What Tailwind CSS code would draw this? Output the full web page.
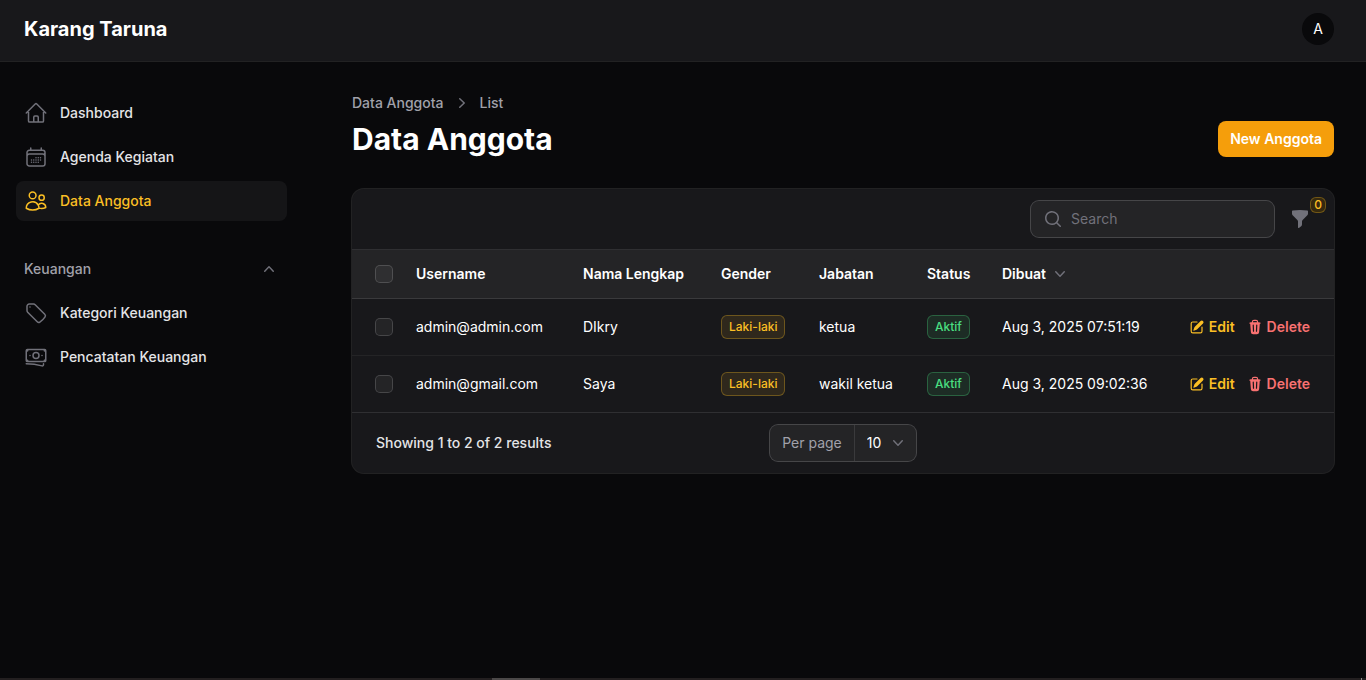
<!DOCTYPE html>
<html lang="id">
<head>
<meta charset="utf-8">
<meta name="viewport" content="width=device-width, initial-scale=1">
<title>Data Anggota - Karang Taruna</title>
<script src="https://cdn.jsdelivr.net/npm/@tailwindcss/browser@4"></script>
</head>
<body class="flex min-h-screen flex-col bg-[#09090b] font-['Inter',sans-serif] text-sm text-white antialiased">
<svg class="hidden" aria-hidden="true">
  <symbol id="pencil" viewBox="0 0 20 20" fill="currentColor"><path d="m5.433 13.917 1.262-3.155A4 4 0 0 1 7.58 9.42l6.92-6.918a2.121 2.121 0 0 1 3 3l-6.92 6.918c-.383.383-.84.685-1.343.886l-3.154 1.262a.5.5 0 0 1-.65-.65Z"/><path d="M3.5 5.75c0-.69.56-1.25 1.25-1.25H10A.75.75 0 0 0 10 3H4.75A2.75 2.75 0 0 0 2 5.75v9.5A2.75 2.75 0 0 0 4.75 18h9.5A2.75 2.75 0 0 0 17 15.25V10a.75.75 0 0 0-1.5 0v5.25c0 .69-.56 1.25-1.25 1.25h-9.5c-.69 0-1.25-.56-1.25-1.25v-9.5Z"/></symbol>
  <symbol id="trash" viewBox="0 0 20 20" fill="currentColor"><path fill-rule="evenodd" clip-rule="evenodd" d="M8.75 1A2.75 2.75 0 0 0 6 3.75v.443c-.795.077-1.584.176-2.365.298a.75.75 0 1 0 .23 1.482l.149-.022.841 10.518A2.75 2.75 0 0 0 7.596 19h4.807a2.75 2.75 0 0 0 2.742-2.53l.841-10.52.149.023a.75.75 0 0 0 .23-1.482A41.03 41.03 0 0 0 14 4.193V3.75A2.75 2.75 0 0 0 11.25 1h-2.5ZM10 4c.84 0 1.673.025 2.5.075V3.75c0-.69-.56-1.25-1.25-1.25h-2.5c-.69 0-1.25.56-1.25 1.25v.325C8.327 4.025 9.16 4 10 4ZM8.58 7.72a.75.75 0 0 0-1.5.06l.3 7.5a.75.75 0 1 0 1.5-.06l-.3-7.5Zm4.34.06a.75.75 0 1 0-1.5-.06l-.3 7.5a.75.75 0 1 0 1.5.06l.3-7.5Z"/></symbol>
  <symbol id="chevron-down" viewBox="0 0 20 20" fill="currentColor"><path fill-rule="evenodd" clip-rule="evenodd" d="M5.23 7.21a.75.75 0 0 1 1.06.02L10 11.168l3.71-3.938a.75.75 0 1 1 1.08 1.04l-4.25 4.5a.75.75 0 0 1-1.08 0l-4.25-4.5a.75.75 0 0 1 .02-1.06Z"/></symbol>
</svg>

<header class="flex h-[61px] shrink-0 items-center justify-between bg-[#18181b] pb-1 pl-6 pr-8 ring-1 ring-white/10">
  <a href="#" class="text-xl font-bold leading-5">Karang Taruna</a>
  <button type="button" aria-label="User menu" class="size-8 rounded-full bg-[#09090b] text-sm">A</button>
</header>

<div class="flex grow">
  <aside class="w-80 shrink-0 pt-8">
    <nav class="flex flex-col gap-7 pl-4 pr-[33px] font-medium text-[#e4e4e7]">
      <ul class="flex flex-col gap-1">
        <li><a href="#" class="flex items-center gap-3 rounded-lg p-2 leading-6">
          <svg class="size-6 shrink-0 text-[#71717a]" fill="none" viewBox="0 0 24 24" stroke="currentColor" stroke-width="1.5" stroke-linecap="round" stroke-linejoin="round"><path d="m2.25 12 8.954-8.955c.44-.439 1.152-.439 1.591 0L21.75 12M4.5 9.75v10.125c0 .621.504 1.125 1.125 1.125H9.75v-4.875c0-.621.504-1.125 1.125-1.125h2.25c.621 0 1.125.504 1.125 1.125V21h4.125c.621 0 1.125-.504 1.125-1.125V9.75M8.25 21h8.25"/></svg>
          Dashboard</a></li>
        <li><a href="#" class="flex items-center gap-3 rounded-lg p-2 leading-6">
          <svg class="size-6 shrink-0 text-[#71717a]" fill="none" viewBox="0 0 24 24" stroke="currentColor" stroke-width="1.5" stroke-linecap="round" stroke-linejoin="round"><path d="M6.75 3v2.25M17.25 3v2.25M3 18.75V7.5a2.25 2.25 0 0 1 2.25-2.25h13.5A2.25 2.25 0 0 1 21 7.5v11.25m-18 0A2.25 2.25 0 0 0 5.25 21h13.5A2.25 2.25 0 0 0 21 18.75m-18 0v-7.5A2.25 2.25 0 0 1 5.25 9h13.5A2.25 2.25 0 0 1 21 11.25v7.5m-9-6h.008v.008H12v-.008ZM12 15h.008v.008H12V15Zm0 2.25h.008v.008H12v-.008ZM9.75 15h.008v.008H9.75V15Zm0 2.25h.008v.008H9.75v-.008ZM7.5 15h.008v.008H7.5V15Zm0 2.25h.008v.008H7.5v-.008Zm6.75-4.5h.008v.008h-.008v-.008Zm0 2.25h.008v.008h-.008V15Zm0 2.25h.008v.008h-.008v-.008Zm2.25-4.5h.008v.008H16.5v-.008Zm0 2.25h.008v.008H16.5V15Z"/></svg>
          Agenda Kegiatan</a></li>
        <li><a href="#" aria-current="page" class="flex items-center gap-3 rounded-lg bg-white/5 p-2 leading-6 text-[#fbbf24]">
          <svg class="size-6 shrink-0" fill="none" viewBox="0 0 24 24" stroke="currentColor" stroke-width="1.5" stroke-linecap="round" stroke-linejoin="round"><path d="M15 19.128a9.38 9.38 0 0 0 2.625.372 9.337 9.337 0 0 0 4.121-.952 4.125 4.125 0 0 0-7.533-2.493M15 19.128v-.003c0-1.113-.285-2.16-.786-3.07M15 19.128v.106A12.318 12.318 0 0 1 8.624 21c-2.331 0-4.512-.645-6.374-1.766l-.001-.109a6.375 6.375 0 0 1 11.964-3.07M12 6.375a3.375 3.375 0 1 1-6.75 0 3.375 3.375 0 0 1 6.75 0Zm8.25 2.25a2.625 2.625 0 1 1-5.25 0 2.625 2.625 0 0 1 5.25 0Z"/></svg>
          Data Anggota</a></li>
      </ul>
      <div class="flex flex-col gap-1">
        <button type="button" aria-expanded="true" class="flex items-center justify-between p-2 leading-6 text-[#a1a1aa]">
          Keuangan
          <svg class="size-5 text-[#71717a]" viewBox="0 0 20 20" fill="currentColor"><path fill-rule="evenodd" clip-rule="evenodd" d="M14.77 12.79a.75.75 0 0 1-1.06-.02L10 8.832 6.29 12.77a.75.75 0 1 1-1.08-1.04l4.25-4.5a.75.75 0 0 1 1.08 0l4.25 4.5a.75.75 0 0 1-.02 1.06Z"/></svg>
        </button>
        <ul class="flex flex-col gap-1">
          <li><a href="#" class="flex items-center gap-3 rounded-lg p-2 leading-6">
            <svg class="size-6 shrink-0 text-[#71717a]" fill="none" viewBox="0 0 24 24" stroke="currentColor" stroke-width="1.5" stroke-linecap="round" stroke-linejoin="round"><path d="M9.568 3H5.25A2.25 2.25 0 0 0 3 5.25v4.318c0 .597.237 1.17.659 1.591l9.581 9.581c.699.699 1.78.872 2.607.33a18.095 18.095 0 0 0 5.223-5.223c.542-.827.369-1.908-.33-2.607L11.16 3.66A2.25 2.25 0 0 0 9.568 3Z"/><path d="M6 6h.008v.008H6V6Z"/></svg>
            Kategori Keuangan</a></li>
          <li><a href="#" class="flex items-center gap-3 rounded-lg p-2 leading-6">
            <svg class="size-6 shrink-0 text-[#71717a]" fill="none" viewBox="0 0 24 24" stroke="currentColor" stroke-width="1.5" stroke-linecap="round" stroke-linejoin="round"><path d="M2.25 18.75a60.07 60.07 0 0 1 15.797 2.101c.727.198 1.453-.342 1.453-1.096V18.75M3.75 4.5v.75A.75.75 0 0 1 3 6h-.75m0 0v-.375c0-.621.504-1.125 1.125-1.125H20.25M2.25 6v9m18-10.5v.75c0 .414.336.75.75.75h.75m-1.5-1.5h.375c.621 0 1.125.504 1.125 1.125v9.75c0 .621-.504 1.125-1.125 1.125h-.375m1.5-1.5H21a.75.75 0 0 0-.75.75v.75m0 0H3.75m0 0h-.375a1.125 1.125 0 0 1-1.125-1.125V15m1.5 1.5v-.75A.75.75 0 0 0 3 15h-.75M15 10.5a3 3 0 1 1-6 0 3 3 0 0 1 6 0Zm3 0h.008v.008H18V10.5Zm-12 0h.008v.008H6V10.5Z"/></svg>
            Pencatatan Keuangan</a></li>
        </ul>
      </div>
    </nav>
  </aside>

  <main class="flex min-w-0 grow flex-col gap-8 px-8 pt-8">
    <div class="flex items-end justify-between">
      <div>
        <nav aria-label="Breadcrumb" class="mb-2 flex items-center gap-2 font-medium leading-5 text-[#a1a1aa]">
          <a href="#">Data Anggota</a>
          <svg class="size-5 text-[#71717a]" viewBox="0 0 20 20" fill="currentColor"><path fill-rule="evenodd" clip-rule="evenodd" d="M7.21 14.77a.75.75 0 0 1 .02-1.06L11.168 10 7.23 6.29a.75.75 0 1 1 1.04-1.08l4.5 4.25a.75.75 0 0 1 0 1.08l-4.5 4.25a.75.75 0 0 1-1.06-.02Z"/></svg>
          <a href="#">List</a>
        </nav>
        <h1 class="text-3xl font-bold">Data Anggota</h1>
      </div>
      <button type="button" class="rounded-lg bg-[#f59e0b] px-3 py-2 font-semibold leading-5">New Anggota</button>
    </div>

    <section class="rounded-xl bg-[#18181b] ring-1 ring-white/10">
      <div class="flex items-center justify-end gap-4 px-6 py-3">
        <label class="flex h-9 w-[243px] items-center gap-2 rounded-lg bg-white/5 px-3 ring-1 ring-white/20">
          <svg class="size-5 shrink-0 text-[#71717a]" viewBox="0 0 20 20" fill="currentColor"><path fill-rule="evenodd" clip-rule="evenodd" d="M9 3.5a5.5 5.5 0 1 0 0 11 5.5 5.5 0 0 0 0-11ZM2 9a7 7 0 1 1 12.452 4.391l3.328 3.329a.75.75 0 1 1-1.06 1.06l-3.329-3.328A7 7 0 0 1 2 9Z"/></svg>
          <input type="search" aria-label="Search" placeholder="Search" class="w-full min-w-0 bg-transparent leading-6 outline-none placeholder:text-[#71717a]">
        </label>
        <button type="button" aria-label="Filter" class="relative text-[#71717a]">
          <svg class="size-5" viewBox="0 0 20 20" fill="currentColor"><path fill-rule="evenodd" clip-rule="evenodd" d="M2.628 1.601C5.028 1.206 7.49 1 10 1s4.973.206 7.372.601a.75.75 0 0 1 .628.74v2.288a2.25 2.25 0 0 1-.659 1.59l-4.682 4.683a2.25 2.25 0 0 0-.659 1.59v3.037c0 .684-.31 1.33-.844 1.757l-1.937 1.55A.75.75 0 0 1 8 18.25v-5.757a2.25 2.25 0 0 0-.659-1.591L2.659 6.22A2.25 2.25 0 0 1 2 4.629V2.34a.75.75 0 0 1 .628-.74Z"/></svg>
          <span class="absolute -right-4 -top-3 flex size-4 items-center justify-center rounded-md border border-[#fbbf24]/30 bg-[#35290f] text-xs font-medium leading-none text-[#fbbf24]">0</span>
        </button>
      </div>

      <table class="w-full table-fixed border-b border-white/10 text-left leading-5">
        <thead class="border-y border-white/10 bg-white/5">
          <tr class="h-[49px] font-semibold">
            <th class="w-[52px] pl-6"><input type="checkbox" aria-label="Select all" class="block size-4 appearance-none rounded-sm bg-white/5 ring-1 ring-white/20 checked:bg-[#f59e0b]"></th>
            <th class="w-[167px] px-3 font-semibold">Username</th>
            <th class="w-[138px] px-3 font-semibold">Nama Lengkap</th>
            <th class="w-[98px] px-3 font-semibold">Gender</th>
            <th class="w-[108px] px-3 font-semibold">Jabatan</th>
            <th class="w-[75px] px-3 font-semibold">Status</th>
            <th class="px-3 font-semibold"><button type="button" class="flex items-center gap-1">Dibuat <svg class="size-5 text-[#71717a]"><use href="#chevron-down"/></svg></button></th>
            <th class="w-[144px]" aria-label="Actions"></th>
          </tr>
        </thead>
        <tbody class="divide-y divide-white/5">
          <tr class="h-[57px]">
            <td class="pl-6"><input type="checkbox" aria-label="Select admin@admin.com" class="block size-4 appearance-none rounded-sm bg-white/5 ring-1 ring-white/20 checked:bg-[#f59e0b]"></td>
            <td class="px-3">admin@admin.com</td>
            <td class="px-3">DIkry</td>
            <td class="px-3"><span class="inline-block whitespace-nowrap rounded-md border border-[#fbbf24]/30 bg-[#fbbf24]/10 px-[7px] py-[3px] align-middle text-xs font-medium text-[#fbbf24]">Laki-laki</span></td>
            <td class="px-3">ketua</td>
            <td class="px-3"><span class="inline-block whitespace-nowrap rounded-md border border-[#4ade80]/30 bg-[#4ade80]/10 px-[7px] py-[3px] align-middle text-xs font-medium text-[#4ade80]">Aktif</span></td>
            <td class="px-3">Aug 3, 2025 07:51:19</td>
            <td class="pr-6"><div class="flex justify-end gap-3 font-semibold">
              <a href="#" class="flex items-center gap-1 text-[#fbbf24]"><svg class="size-4"><use href="#pencil"/></svg>Edit</a>
              <button type="button" class="flex items-center gap-1 text-[#f87171]"><svg class="size-4"><use href="#trash"/></svg>Delete</button>
            </div></td>
          </tr>
          <tr class="h-[57px]">
            <td class="pl-6"><input type="checkbox" aria-label="Select admin@gmail.com" class="block size-4 appearance-none rounded-sm bg-white/5 ring-1 ring-white/20 checked:bg-[#f59e0b]"></td>
            <td class="px-3">admin@gmail.com</td>
            <td class="px-3">Saya</td>
            <td class="px-3"><span class="inline-block whitespace-nowrap rounded-md border border-[#fbbf24]/30 bg-[#fbbf24]/10 px-[7px] py-[3px] align-middle text-xs font-medium text-[#fbbf24]">Laki-laki</span></td>
            <td class="px-3">wakil ketua</td>
            <td class="px-3"><span class="inline-block whitespace-nowrap rounded-md border border-[#4ade80]/30 bg-[#4ade80]/10 px-[7px] py-[3px] align-middle text-xs font-medium text-[#4ade80]">Aktif</span></td>
            <td class="px-3">Aug 3, 2025 09:02:36</td>
            <td class="pr-6"><div class="flex justify-end gap-3 font-semibold">
              <a href="#" class="flex items-center gap-1 text-[#fbbf24]"><svg class="size-4"><use href="#pencil"/></svg>Edit</a>
              <button type="button" class="flex items-center gap-1 text-[#f87171]"><svg class="size-4"><use href="#trash"/></svg>Delete</button>
            </div></td>
          </tr>
        </tbody>
      </table>

      <div class="grid grid-cols-[1fr_auto_1fr] items-center px-6 py-3">
        <span class="font-medium text-[#e4e4e7]">Showing 1 to 2 of 2 results</span>
        <div class="flex h-9 items-center rounded-lg bg-white/5 ring-1 ring-white/20">
          <label for="per-page" class="flex h-full items-center border-r border-white/10 px-3 text-[#a1a1aa]">Per page</label>
          <div class="grid items-center">
            <select id="per-page" class="col-start-1 row-start-1 w-[61px] appearance-none bg-transparent pl-3 leading-6 outline-none"><option>10</option><option>25</option><option>50</option></select>
            <svg class="pointer-events-none col-start-1 row-start-1 mr-2 size-5 justify-self-end text-[#71717a]"><use href="#chevron-down"/></svg>
          </div>
        </div>
      </div>
    </section>
  </main>
</div>

<footer class="flex h-[2px] shrink-0 bg-[#231f20]">
  <div class="ml-[36%] w-12 bg-[#4b4848]"></div>
  <div class="ml-auto mr-1 w-px bg-[#8a8888]"></div>
</footer>
</body>
</html>
